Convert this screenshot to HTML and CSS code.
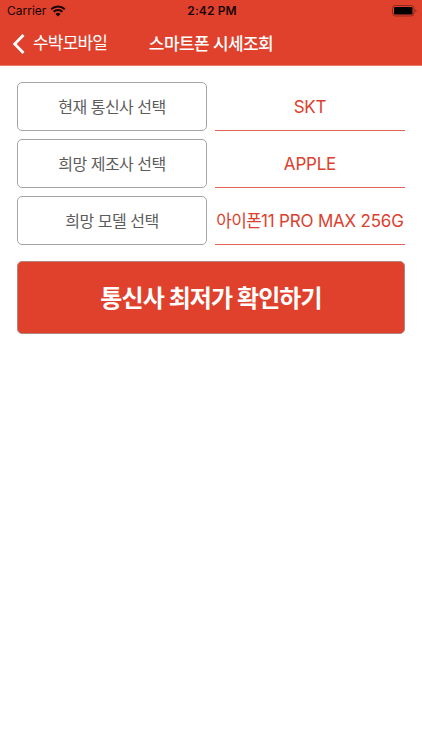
FILE: index.html
```html
<!DOCTYPE html>
<html lang="ko">
<head>
  <meta charset="UTF-8">
  <meta name="viewport" content="width=device-width, initial-scale=1">
  <title>스마트폰 시세조회</title>
  <link rel="stylesheet" href="styles.css">
</head>
<body>

  <header class="header">
    <div class="status-bar">
      <div class="carrier">
        <span>Carrier</span>
        <svg class="wifi" width="16" height="12" viewBox="0 0 16 12">
          <path d="M1.2 4.3a9.7 9.7 0 0 1 13.6 0M3.6 6.8a6.3 6.3 0 0 1 8.8 0" fill="none" stroke="#170503" stroke-width="1.9"/>
          <path d="M8 11.4L5.5 8.9a3.6 3.6 0 0 1 5 0z" fill="#170503"/>
        </svg>
      </div>
      <span class="time">2:42 PM</span>
      <svg class="battery" width="25" height="12" viewBox="0 0 25 12">
        <rect x="0.5" y="0.5" width="21.5" height="10.5" rx="3" fill="none" stroke="#8f2a1d"/>
        <rect x="2" y="2" width="18.5" height="7.5" rx="1.3" fill="#000"/>
        <path d="M23.3 4v3.6q1.2-.5 1.2-1.8T23.3 4z" fill="#8f2a1d"/>
      </svg>
    </div>
    <nav class="nav-bar">
      <a class="back" href="#">
        <svg width="13" height="20" viewBox="0 0 13 20">
          <path d="M11.500 1L2.700 10l8.800 9" fill="none" stroke="#fff" stroke-width="2.8"/>
        </svg>
        <span class="back-label">수박모바일</span>
      </a>
      <h1 class="title">스마트폰 시세조회</h1>
    </nav>
  </header>

  <main class="content">
    <div class="row">
      <button class="select-btn">현재 통신사 선택</button>
      <div class="value">SKT</div>
    </div>
    <div class="row">
      <button class="select-btn">희망 제조사 선택</button>
      <div class="value">APPLE</div>
    </div>
    <div class="row">
      <button class="select-btn">희망 모델 선택</button>
      <div class="value"><span class="ko">아이폰</span>11 PRO MAX 256G</div>
    </div>
    <button class="submit-btn">통신사 최저가 확인하기</button>
  </main>

</body>
</html>
```
FILE: styles.css
```css
* {
  box-sizing: border-box;
}

body {
  margin: 0;
  background: #fff;
  font-family: Inter, "Noto Sans CJK KR", sans-serif;
}

button {
  font-family: inherit;
  cursor: pointer;
}

/* Header */
.header {
  height: 66px;
  background: #e0412c;
  border-bottom: 1px solid #e9786a;
}

.status-bar {
  display: grid;
  grid-template-columns: 1fr auto 1fr;
  align-items: center;
  height: 22px;
  padding: 0 5px 0 7px;
  color: #170503;
  font-size: 12px;
  line-height: 22px;
}

.carrier {
  display: flex;
  align-items: center;
  gap: 4px;
}

.time {
  font-weight: 600;
  letter-spacing: 0.1px;
}

.battery {
  justify-self: end;
}

.nav-bar {
  display: grid;
  grid-template-columns: 1fr auto 1fr;
  align-items: center;
  height: 43px;
  padding: 0 12px;
  color: #fff;
}

.back {
  display: flex;
  align-items: center;
  gap: 8px;
  color: #fff;
  font-size: 17px;
  letter-spacing: -0.8px;
  line-height: 24px;
  text-decoration: none;
  white-space: nowrap;
}

.back-label {
  padding-bottom: 2px;
}

.title {
  margin: 0;
  font-size: 17px;
  font-weight: 500;
  letter-spacing: -0.6px;
  line-height: 24px;
}

/* Form */
.content {
  display: flex;
  flex-direction: column;
  gap: 8px;
  padding: 16px 17px 0;
}

.row {
  display: grid;
  grid-template-columns: 190px 190px;
  gap: 8px;
  height: 49px;
}

.select-btn {
  padding: 0 0 2px;
  background: #fff;
  border: 1px solid #a5a5a5;
  border-radius: 5px;
  color: #5c5c5c;
  font-size: 16px;
  letter-spacing: -0.5px;
}

.value {
  padding-top: 3px;
  border-bottom: 1px solid #df6456;
  color: #dc402e;
  font-size: 17px;
  letter-spacing: -0.2px;
  line-height: 45px;
  text-align: center;
  white-space: nowrap;
}

.ko {
  letter-spacing: -0.7px;
}

.submit-btn {
  height: 73px;
  margin-top: 8px;
  padding: 0 0 2px;
  background: #e0412c;
  border: 1px solid #b08580;
  border-radius: 5px;
  color: #fff;
  font-size: 24px;
  font-weight: 700;
  letter-spacing: -0.9px;
}
```
